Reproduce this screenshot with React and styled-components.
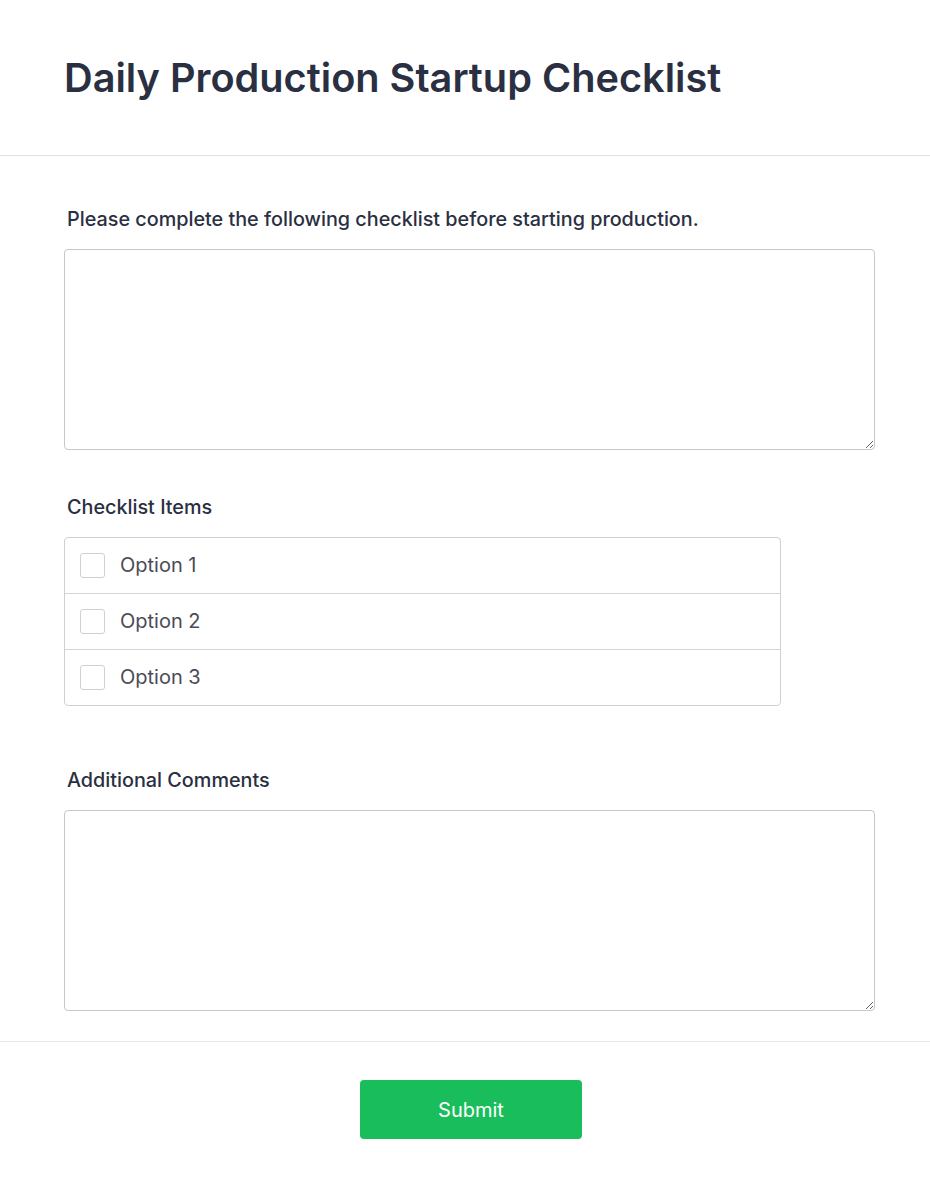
import React from 'react'
import styled, { createGlobalStyle } from 'styled-components'

const GlobalStyle = createGlobalStyle`
  body {
    margin: 0;
    background: #ffffff;
    font-family: Inter, "Noto Sans", sans-serif;
  }
`

const Page = styled.div`
  width: 930px;
  min-height: 1188px;
  background: #fff;
`

const Header = styled.header`
  height: 155px;
  display: flex;
  align-items: center;
  padding-left: 64px;
  border-bottom: 1px solid #dedee3;
  h1 {
    margin: 0;
    font-size: 39.7px;
    font-weight: 600;
    color: #2a2f42;
  }
`

const Body = styled.div`
  padding: 52px 55px 30px 64px;
  display: flex;
  flex-direction: column;
`

const Field = styled.div`
  display: flex;
  flex-direction: column;
  margin-bottom: ${p => p.$gap || 0}px;
`

const Label = styled.label`
  font-size: 19.8px;
  font-weight: 500;
  color: #2a2f42;
  line-height: 22px;
  padding-left: 3px;
  margin-bottom: 19px;
`

const TextArea = styled.textarea`
  box-sizing: border-box;
  width: 811px;
  height: 201px;
  border: 1px solid #c6c6cf;
  border-radius: 4px;
  resize: vertical;
  font-family: inherit;
  font-size: 16px;
  padding: 10px;
  outline: none;
`

const CheckList = styled.div`
  box-sizing: border-box;
  width: 717px;
  border: 1px solid #cfcfd6;
  border-radius: 4px;
  display: flex;
  flex-direction: column;
`

const Item = styled.label`
  box-sizing: border-box;
  display: flex;
  align-items: center;
  height: ${p => (p.$first ? 55 : 56)}px;
  padding: 0 0 2px 15px;
  gap: 15px;
  border-top: ${p => (p.$first ? 'none' : '1px solid #d4d4da')};
  font-size: 20px;
  color: #4b4b55;
  cursor: pointer;
`

const Box = styled.span`
  box-sizing: border-box;
  width: 25px;
  height: 25px;
  margin-top: 2px;
  border: 1px solid #cfcfd6;
  border-radius: 3px;
  background: #fff;
`

const Footer = styled.footer`
  border-top: 1px solid #e6e6ea;
  display: flex;
  justify-content: center;
  padding: 38px 0 50px 12px;
`

const Submit = styled.button`
  width: 222px;
  height: 59px;
  border: none;
  border-radius: 4px;
  background: #19bd5b;
  color: #fff;
  font-family: inherit;
  font-size: 20px;
  font-weight: 400;
  cursor: pointer;
`

const options = ['Option 1', 'Option 2', 'Option 3']

export default function App() {
  return (
    <Page>
      <GlobalStyle />
      <Header>
        <h1>Daily Production Startup Checklist</h1>
      </Header>
      <Body>
        <Field $gap={46}>
          <Label>Please complete the following checklist before starting production.</Label>
          <TextArea />
        </Field>
        <Field $gap={63}>
          <Label>Checklist Items</Label>
          <CheckList>
            {options.map((o, i) => (
              <Item key={o} $first={i === 0}>
                <Box />
                {o}
              </Item>
            ))}
          </CheckList>
        </Field>
        <Field>
          <Label>Additional Comments</Label>
          <TextArea />
        </Field>
      </Body>
      <Footer>
        <Submit>Submit</Submit>
      </Footer>
    </Page>
  )
}
